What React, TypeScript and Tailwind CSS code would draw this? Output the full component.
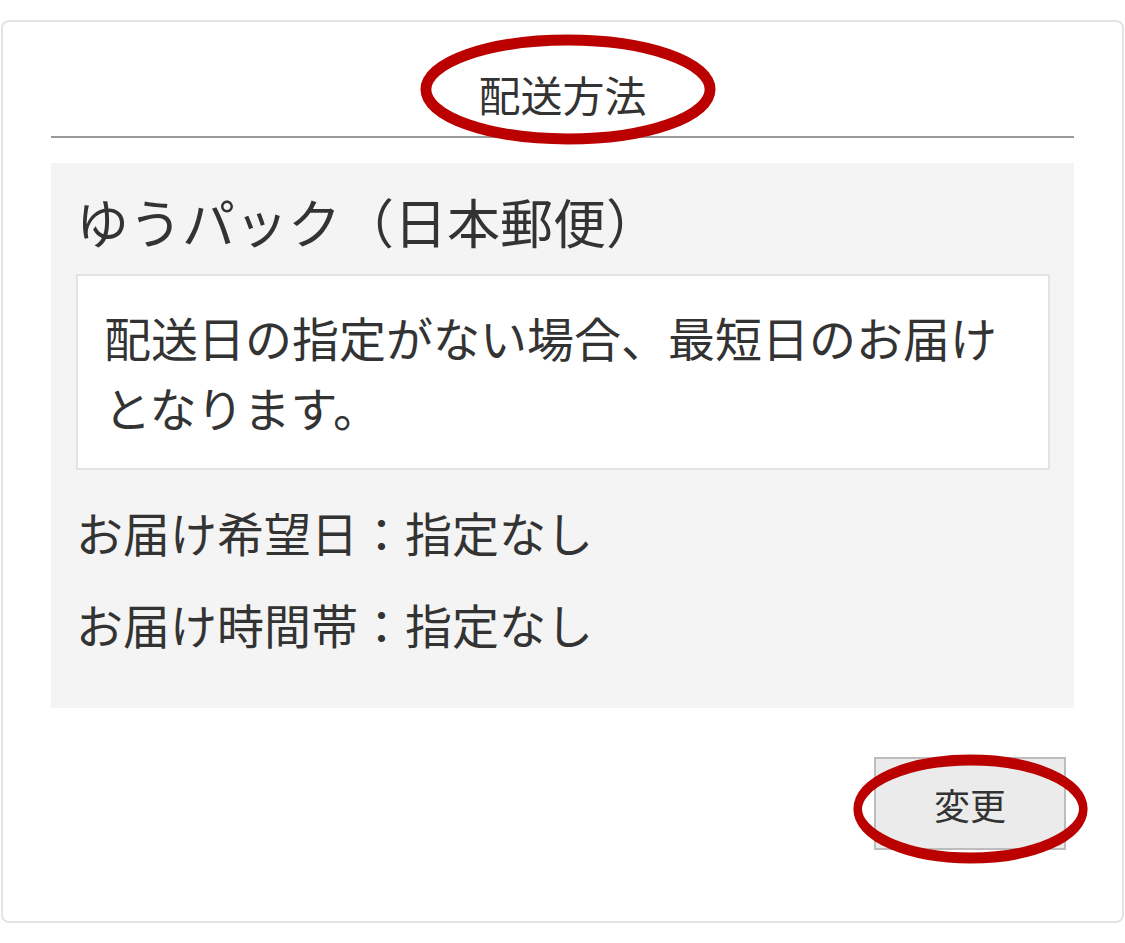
import React from "react";

const font = {
  fontFamily: '"Noto Sans CJK JP", "Noto Sans", sans-serif',
};

/** Hand-drawn style red ring laid over a target. */
function Ring({ className }: { className: string }) {
  return (
    <svg
      className={`pointer-events-none absolute ${className}`}
      viewBox="0 0 300 110"
      preserveAspectRatio="none"
      aria-hidden
    >
      <ellipse
        cx="150"
        cy="55"
        rx="144"
        ry="49"
        fill="none"
        stroke="#bb0000"
        strokeWidth="11"
      />
    </svg>
  );
}

export default function App() {
  return (
    <div className="bg-white pt-[20px] pl-[1px] pr-[1px] text-[#333]" style={font}>
      <section className="relative h-[903px] w-[1123px] rounded-[8px] border-2 border-[#e3e3e3] px-[48px] pt-[42px]">
        <h2 className="text-center text-[42px] leading-[60px]">配送方法</h2>
        <Ring className="left-[417px] top-[12px] h-[111px] w-[296px]" />
        <hr className="mt-[12px] border-t-2 border-[#9a9a9a]" />

        <div className="mt-[25px] bg-[#f4f4f4] pb-[54px] pl-[25px] pr-[24px] pt-[25px]">
          <h3 className="text-[53px] leading-[66px]">ゆうパック（日本郵便）</h3>
          <div className="mt-[20px] border-2 border-[#e3e3e3] bg-white px-[26px] py-[26px] text-[47px] leading-[70px]">
            配送日の指定がない場合、最短日のお届けとなります。
          </div>
          <p className="mt-[32px] text-[47px] leading-[60px]">
            お届け希望日：指定なし
          </p>
          <p className="mt-[32px] text-[47px] leading-[60px]">
            お届け時間帯：指定なし
          </p>
        </div>

        <div className="mr-[8px] mt-[49px] flex justify-end">
          <div className="relative">
            <button className="h-[93px] w-[192px] border-2 border-[#bdbdbd] bg-[#ebebeb] text-[36px] text-[#333]">
              変更
            </button>
            <Ring className="-left-[21px] -top-[3px] h-[110px] w-[235px]" />
          </div>
        </div>
      </section>
    </div>
  );
}
